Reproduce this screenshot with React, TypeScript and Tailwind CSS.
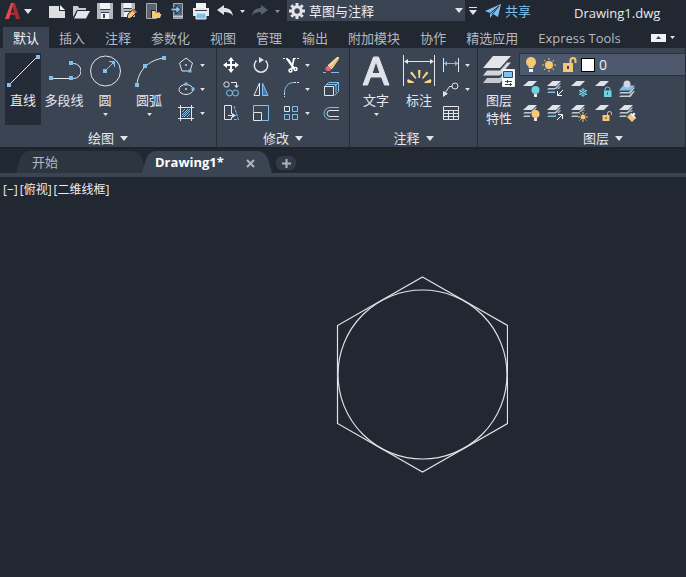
import React from "react";

const LINE = "#e2e5ea";
const BLUE = "#7fc1ee";
const YELLOW = "#f5c873";
const TEAL = "#6fd3e0";

const Svg: React.FC<{
  size?: number;
  width?: number;
  className?: string;
  children: React.ReactNode;
}> = ({ size = 18, width, className = "", children }) => (
  <svg
    width={width ?? size}
    height={size}
    viewBox={`0 0 ${width ?? size} ${size}`}
    fill="none"
    stroke={LINE}
    className={`shrink-0 ${className}`}
    aria-hidden="true"
  >
    {children}
  </svg>
);

const Caret: React.FC<{ big?: boolean; dim?: boolean }> = ({ big, dim }) => (
  <svg
    width={big ? 8 : 5}
    height={big ? 5 : 3}
    viewBox="0 0 8 5"
    className="shrink-0"
    aria-hidden="true"
  >
    <path d="M0 0h8L4 5z" fill={dim ? "#8b929d" : "#dfe2e7"} />
  </svg>
);

// small blue grip square
const Grip: React.FC<{ x: number; y: number; s?: number }> = ({
  x,
  y,
  s = 4,
}) => (
  <rect
    x={x - s / 2}
    y={y - s / 2}
    width={s}
    height={s}
    fill={BLUE}
    stroke="none"
  />
);

/* ---------- quick access icons ---------- */

const LogoIcon = () => (
  <Svg size={18} className="mr-0.5">
    <path d="M1 17 7 1h4l5 16h-4l-1-4H6l-1.500 4z" fill="#a82a34" stroke="none" />
    <path d="M7 1h2.500L5 17H1z" fill="#dc4a52" stroke="none" />
    <path d="M8.500 5 10.500 10.500H6.700z" fill="#222831" stroke="none" />
  </Svg>
);

const NewIcon = () => (
  <Svg>
    <path d="M1 4h10v5h6v7H1z" fill="#dcdee1" stroke="none" />
    <path d="M12 3v5h5z" fill="#f4f5f6" stroke="none" />
  </Svg>
);

const OpenIcon = () => (
  <Svg>
    <path d="M1 15V4h5l1 2h7v3H5z" fill="#c9ccd0" stroke="none" />
    <path d="M5.500 9H18l-4 7.500H2z" fill="#e3e5e8" stroke="none" />
    <path d="M2 15.500 5 8.500h9.500" stroke="#222831" />
  </Svg>
);

const SaveIcon = () => (
  <Svg>
    <path d="M1 1h16v16H1z" fill="#b4b8be" stroke="none" />
    <path d="M4 1h10v6H4zM5 10h8v7H5z" fill="#f2f3f4" stroke="none" />
    <path d="M4 7.500h10M5 10.500h8" stroke="#3a414c" />
    <path d="M7 12h2v4H7z" fill="#3a414c" stroke="none" />
  </Svg>
);

const SaveAsIcon = () => (
  <Svg>
    <path d="M1 1h14v14H1z" fill="#b4b8be" stroke="none" />
    <path d="M3.500 1h8v5h-8zM4 9h7v6H4z" fill="#f2f3f4" stroke="none" />
    <path d="M3.500 6.500h8M4 9.500h7" stroke="#3a414c" />
    <path d="m7 17 1-5 6-5 3 3-6 6z" fill={YELLOW} stroke="#222831" />
    <path d="m14 7 3 3-2 1.500-3-3z" fill="#d96a5a" stroke="none" />
  </Svg>
);

const OpenMobileIcon = () => (
  <Svg>
    <path d="M2.500 1.500h10v15h-10z" fill="#5c636d" stroke="#a4a9b1" />
    <path d="M7 16V8h4l1 2h5v6z" fill="#222831" stroke="none" />
    <path d="M8 15V9h3l1 1.500h4V12h1.500L16 16H8z" fill={YELLOW} stroke="none" />
  </Svg>
);

const SaveMobileIcon = () => (
  <Svg>
    <path d="M5.500 1.500h9v15h-9z" fill="#5c636d" stroke="#a4a9b1" />
    <path d="M5 14.500h10" stroke="#c4c7cc" strokeWidth="2" />
    <path d="M3 6h5V3l5 4.500L8 12V9H3z" fill={BLUE} stroke="#222831" />
  </Svg>
);

const PrintIcon = () => (
  <Svg>
    <path d="M4 1h10v5H4z" fill="#f2f3f4" stroke="none" />
    <path d="M1 6h16v8H1z" fill="#e6e8ea" stroke="none" />
    <path d="M3 8.500h12" stroke="#3a414c" />
    <path d="M4 11h10v6H4z" fill={BLUE} stroke="#f2f3f4" />
  </Svg>
);

const UndoIcon = () => (
  <Svg>
    <path
      d="M1 8l7-5v3c5 0 8 2 9 8-2-3-5-4-9-4v3z"
      fill="#dfe2e6"
      stroke="none"
    />
  </Svg>
);

const RedoIcon = () => (
  <Svg>
    <path
      d="M17 8l-7-5v3c-5 0-8 2-9 8 2-3 5-4 9-4v3z"
      fill="#59616d"
      stroke="none"
    />
  </Svg>
);

const GearIcon = () => (
  <Svg size={16}>
    <circle cx="8" cy="8" r="4.200" stroke="#e3e5e8" strokeWidth="3" />
    <path
      d="M8 0v3M8 13v3M0 8h3M13 8h3M2.300 2.300l2 2M11.700 11.700l2 2M13.700 2.300l-2 2M4.300 11.700l-2 2"
      stroke="#e3e5e8"
      strokeWidth="3"
    />
  </Svg>
);

const SendIcon = () => (
  <Svg size={16}>
    <path d="M0 8 16 1l-3 13-5-3-3 4v-5z" fill={BLUE} stroke="none" />
    <path d="M5 10.500 14 3 7 11.500" stroke="#222831" />
  </Svg>
);

/* ---------- draw icons ---------- */

const LineIcon = () => (
  <Svg size={34}>
    <path d="M3 32 32 3" />
    <Grip x={3} y={32} />
    <Grip x={32} y={4} />
  </Svg>
);

const PolylineIcon = () => (
  <Svg size={34}>
    <path d="M4 25.500h20M24 10.500h2.500a7.500 7.500 0 0 1 0 15H24" />
    <Grip x={4} y={25} />
    <Grip x={24} y={25} />
    <Grip x={24} y={10} />
  </Svg>
);

const CircleIcon = () => (
  <Svg size={34}>
    <circle cx="17.500" cy="18" r="15" />
    <path d="M17 18 26 9M21 8.500h5.500V14" stroke={BLUE} />
    <path d="M22 8h5v5z" fill={BLUE} stroke="none" />
    <Grip x={17} y={18} />
  </Svg>
);

const ArcIcon = () => (
  <Svg size={34}>
    <path d="M5 32C6 18 16 7 32 5" />
    <Grip x={5} y={32} />
    <Grip x={13} y={13} />
    <Grip x={32} y={5} />
  </Svg>
);

const PolygonIcon = () => (
  <Svg>
    <path d="m9 2 6.500 5L13 15H5L2.500 7z" />
    <Grip x={9} y={9} s={2} />
    <Grip x={13} y={15} s={3} />
  </Svg>
);

const EllipseIcon = () => (
  <Svg>
    <ellipse cx="9" cy="9.500" rx="7" ry="5" />
    <Grip x={9} y={4} s={3} />
    <Grip x={16} y={9} s={3} />
    <Grip x={9} y={9} s={2} />
  </Svg>
);

const HatchIcon = () => (
  <Svg>
    <path d="M1 3.500h16M1 14.500h16M3.500 1v16M14.500 1v16" />
    <path
      d="m5 8 3-3M5 11l6-6M5 13l8-8M7 13l6-6M10 13l3-3"
      stroke={BLUE}
    />
  </Svg>
);

/* ---------- modify icons ---------- */

const MoveIcon = () => (
  <Svg>
    <path d="M9 3v12M3 9h12" stroke="#fff" strokeWidth="2" />
    <path
      d="M9 1l3 4H6zM9 17l3-4H6zM1 9l4-3v6zM17 9l-4-3v6z"
      fill="#fff"
      stroke="none"
    />
  </Svg>
);

const RotateIcon = () => (
  <Svg>
    <path d="M4.500 4.500a6.700 6.700 0 1 0 9 0" strokeWidth="1.500" />
    <path d="M7 1v6l5-3z" fill={LINE} stroke="none" />
  </Svg>
);

const TrimIcon = () => (
  <Svg>
    <path d="M1 2.500h5M12 2.500h5" strokeDasharray="2 1" />
    <path d="m4 3 3 0 6 9-2 1zM11 2l2 0-2.500 11H9z" fill="#fff" stroke="none" />
    <circle cx="8.500" cy="14.500" r="1.500" stroke="#fff" strokeWidth="1.500" />
    <circle cx="13.500" cy="13" r="1.500" stroke="#fff" strokeWidth="1.500" />
  </Svg>
);

const EraseIcon = () => (
  <Svg>
    <path d="m6 9 9-8h2v2l-7 10z" fill="#f4dc9a" stroke="none" />
    <path d="m8 12 9-10" stroke="#e0a05c" />
    <path d="m4 11 3-2 3 3-2 3H5l-2-2z" fill="#e8656c" stroke="none" />
    <path d="m6 9 4 4" stroke="#f5f6f8" />
    <path d="M1 16.500h3M9 16.500h8" stroke={BLUE} />
  </Svg>
);

const CopyIcon = () => (
  <Svg>
    <circle cx="4.500" cy="4.500" r="2.700" />
    <path d="M9 2.500h5.500V6" />
    <path d="M12 5.500h5L14.500 8z" fill={LINE} stroke="none" />
    <circle cx="7.500" cy="13" r="3" stroke={BLUE} />
    <circle cx="13.500" cy="13" r="3" stroke={BLUE} />
  </Svg>
);

const MirrorIcon = () => (
  <Svg>
    <path d="M7.500 3v12.500H2z" />
    <path d="M10.500 3v12.500H16z" fill="#3f7db0" stroke={BLUE} />
  </Svg>
);

const FilletIcon = () => (
  <Svg>
    <path d="M2.500 14v-1C2.500 7 6 2.500 12 2.500" stroke={BLUE} />
    <path d="M12 2.500h5" strokeDasharray="2 1" />
    <path d="M2.500 13v4" strokeDasharray="2 1" />
  </Svg>
);

const BoxIcon = () => (
  <Svg>
    <path d="m2.500 6.500 4-4h10l-4 4M16.500 2.500v9l-4 4" stroke={BLUE} />
    <path d="M2.500 6.500h9v9h-9z" />
    <path d="M5 4.500h9v8" stroke={BLUE} />
  </Svg>
);

const StretchIcon = () => (
  <Svg>
    <path d="M9.500 10V1.500h-7v14h7V13" />
    <path d="M6 11.500h6" />
    <path d="m10 9 4 2.500-4 2.500z" fill={LINE} stroke="none" />
    <path d="m12 2 4.500 13.500H12" stroke={BLUE} strokeDasharray="3 1" />
  </Svg>
);

const ScaleIcon = () => (
  <Svg>
    <path d="M1.500 8V1.500h15v15H10" stroke={BLUE} />
    <path d="M1.500 8.500h8v8h-8z" />
  </Svg>
);

const ArrayIcon = () => (
  <Svg>
    <path d="M2.500 2.500h5v5h-5z" />
    <path
      d="M10.500 2.500h5v5h-5zM2.500 10.500h5v5h-5zM10.500 10.500h5v5h-5z"
      stroke={BLUE}
    />
  </Svg>
);

const OffsetIcon = () => (
  <Svg>
    <path d="M17 3.500H8a6 6 0 0 0 0 12h9" stroke={BLUE} />
    <path d="M17 6.500H8a3 3 0 0 0 0 6h9" />
  </Svg>
);

/* ---------- annotation icons ---------- */

const TextIcon = () => (
  <Svg size={34}>
    <path
      d="M4 32 14.500 4h5L30 32h-4.500l-3-8h-11l-3 8zM13 20.500h8L17 8.500z"
      fill="#dfe2e6"
      stroke="#dfe2e6"
    />
  </Svg>
);

const DimensionIcon = () => (
  <Svg size={34}>
    <path d="M1.500 2v31M32.500 2v31M3 8.500h28" />
    <path d="M2 8.500 6 6v5zM32 8.500 28 6v5z" fill={LINE} stroke="none" />
    <path
      d="M16 17h2.500l-.5 8h-1.500zM8 20l2-1.500 4.500 6.500-1 1zM26.500 20l-2-1.500-4.500 6.500 1 1zM5 28l1-2 6 3v1H6zM29.500 28l-1-2-6 3v1h6z"
      fill="#f8d684"
      stroke="none"
    />
  </Svg>
);

const LinearIcon = () => (
  <Svg>
    <path d="M1.500 2v14M16.500 2v14" />
    <path d="M2 7.500h14" stroke={BLUE} />
    <path d="m2 7.500 3-2.500v5zM16 7.500 13 5v5z" fill={BLUE} stroke="none" />
  </Svg>
);

const LeaderIcon = () => (
  <Svg>
    <circle cx="13" cy="6" r="3" />
    <path d="M10 6.500H7.500L3 13" />
    <path d="m1 17 0-6 5 2.500z" fill={LINE} stroke="none" />
  </Svg>
);

const TableIcon = () => (
  <Svg>
    <path d="M1.500 2.500h15v13h-15zM1.500 6.500h15M1.500 9.500h15M1.500 12.500h15M6.500 6v9M11.500 6v9" />
  </Svg>
);

/* ---------- layer icons ---------- */

const Sheets: React.FC<{ count?: number; accent?: boolean }> = ({
  count = 3,
  accent,
}) => (
  <>
    {count > 1 && (
      <>
        <path
          d="M1 13 2.500 11.500H9L13.500 6.500H15L10 13z"
          fill={accent ? BLUE : "#c3c7cd"}
          stroke="none"
        />
        <path
          d="M1 9.500 2.500 8H9L13.500 3.500H15L10 9.500z"
          fill="#c3c7cd"
          stroke="none"
        />
      </>
    )}
    <path d="M1 6 6.500 1H15l-5 5z" fill="#e0e2e6" stroke="none" />
  </>
);

const BulbMark: React.FC<{ color: string }> = ({ color }) => (
  <>
    <circle cx="13.500" cy="10" r="4" fill={color} stroke="none" />
    <path d="M12 14h3v3h-3z" fill="#e8eaed" stroke="none" />
  </>
);

// hides the sheets behind a mark
const Knockout = () => (
  <circle cx="13.500" cy="12.500" r="5.500" fill="#3b4453" stroke="none" />
);

const SunMark = () => (
  <>
    <circle cx="13" cy="13" r="2.500" fill={YELLOW} stroke="none" />
    <path
      d="M13 8v2M13 16v2M8 13h2M16 13h2M9.500 9.500l1 1M15.500 15.500l1 1M16.500 9.500l-1 1M10.500 15.500l-1 1"
      stroke={YELLOW}
    />
  </>
);

const layerTools = [
  {
    label: "关闭",
    icon: (
      <Svg>
        <Sheets count={1} />
        <BulbMark color={TEAL} />
      </Svg>
    ),
  },
  {
    label: "隔离",
    icon: (
      <Svg>
        <Sheets accent />
        <path d="M9 9h9v9H9z" fill="#3b4453" stroke="none" />
        <path d="m17 10-5 5M11.500 11v4.500H16" stroke="#fff" />
      </Svg>
    ),
  },
  {
    label: "冻结",
    icon: (
      <Svg>
        <Sheets count={1} />
        <circle cx="13" cy="12.500" r="3" stroke={TEAL} />
        <path
          d="M13 8v9M9 10.200l8 4.600M17 10.200l-8 4.600"
          stroke={TEAL}
        />
      </Svg>
    ),
  },
  {
    label: "锁定",
    icon: (
      <Svg>
        <Sheets count={1} />
        <path d="M11 11V9.500a2.500 2.500 0 0 1 5 0V11" stroke={TEAL} />
        <path d="M10 10.500h7.500V17H10z" fill={TEAL} stroke="none" />
        <path d="M13.500 12.500v2" stroke="#3b4453" />
      </Svg>
    ),
  },
  {
    label: "置为当前",
    icon: (
      <Svg>
        <path
          d="M1 17 2.500 15.500H11L15.500 11H17l-4.500 6zM1 13.500 2.500 12H11l4.500-4.500H17l-4.500 6z"
          fill="#c9cdd3"
          stroke="none"
        />
        <path d="m1 10.500 4-5h12l-4.500 5z" fill={BLUE} stroke="none" />
        <circle cx="9" cy="4" r="3.500" fill="#d3d6db" stroke="none" />
      </Svg>
    ),
  },
  {
    label: "打开所有图层",
    icon: (
      <Svg>
        <Sheets />
        <Knockout />
        <BulbMark color={YELLOW} />
      </Svg>
    ),
  },
  {
    label: "取消隔离",
    icon: (
      <Svg>
        <Sheets accent />
        <path d="M10 9h8v9h-8z" fill="#3b4453" stroke="none" />
        <path d="m11 16 5-5M12 10.500h4.500V15" stroke="#fff" />
      </Svg>
    ),
  },
  {
    label: "解冻",
    icon: (
      <Svg>
        <Sheets />
        <Knockout />
        <SunMark />
      </Svg>
    ),
  },
  {
    label: "解锁",
    icon: (
      <Svg>
        <Sheets count={1} />
        <path d="M13.500 12V9.500a2 2 0 0 1 4 0V11" stroke={YELLOW} />
        <path d="M8.500 11h7v6h-7z" fill={YELLOW} stroke="none" />
        <path d="M12 13v2" stroke="#3b4453" />
      </Svg>
    ),
  },
  {
    label: "匹配图层",
    icon: (
      <Svg>
        <Sheets />
        <path d="m8 12 4-4h6v9h-6z" fill="#3b4453" stroke="none" />
        <path d="m9 13 3-3 5 5-3 3z" fill={YELLOW} stroke="none" />
        <path d="m12 10 5 5 1-1-2-2.500 1.500-1.500-1.500-1.500-1.500 1.500-1.500-1z" fill="#fff" stroke="none" />
      </Svg>
    ),
  },
];

const LayerPropsIcon = () => (
  <Svg size={34}>
    <path d="M1 30 5 25h13l7-8h4L18 30z" fill="#c6cad0" stroke="none" />
    <path d="M1 22.500 5 17.500h13l7-8h4l-11 13z" fill="#d3d6db" stroke="none" />
    <path d="M1 15 11 3h18L18 15z" fill="#e3e5e8" stroke="none" />
    <path d="M20.500 16.500h12v17h-12z" fill="#fff" stroke="#eceef0" />
    <path d="M21.500 18.500h9v6h-9z" fill={BLUE} stroke="#3b4453" />
    <path d="M23 28.500h7M23 31.500h7M25.500 27v3M28.500 30v3" stroke="#3b4453" />
  </Svg>
);

const LayerStateIcons = () => (
  <>
    <Svg width={12}>
      <circle cx="6" cy="6" r="5" fill={YELLOW} stroke="none" />
      <path d="M3.500 9h5v3h-5z" fill={YELLOW} stroke="none" />
      <path d="M4 13h4v3H4z" fill="#f2f3f4" stroke="none" />
    </Svg>
    <Svg width={16}>
      <circle cx="8" cy="9" r="4" fill={YELLOW} stroke="none" />
      <path
        d="M8 2v2M8 14v2M1 9h2M13 9h2M3 4l1.500 1.500M11.500 12.500 13 14M13 4l-1.500 1.500M4.500 12.500 3 14"
        stroke={YELLOW}
      />
    </Svg>
    <Svg width={16}>
      <path
        d="M9.500 9V4.500a2.500 2.500 0 0 1 5 0V7"
        stroke={YELLOW}
        strokeWidth="2"
      />
      <path d="M2 7h10v9H2z" fill={YELLOW} stroke="none" />
      <path d="M6 10h2v3H6z" fill="#3b4453" stroke="none" />
    </Svg>
  </>
);

/* ---------- building blocks ---------- */

const BigButton: React.FC<{
  label: string;
  icon: React.ReactNode;
  caret?: boolean;
  className?: string;
}> = ({ label, icon, caret, className = "" }) => (
  <button
    type="button"
    className={`flex h-[72px] shrink-0 flex-col items-center whitespace-pre-line text-[13px] leading-[18px] text-[#e6e8ec] ${className}`}
  >
    {icon}
    <span className="mt-1 mb-1">{label}</span>
    {caret && <Caret />}
  </button>
);

const SmallButton: React.FC<{
  label: string;
  icon: React.ReactNode;
  caret?: boolean;
}> = ({ label, icon, caret }) => (
  <button
    type="button"
    aria-label={label}
    className="flex h-[18px] items-center gap-[5px]"
  >
    {icon}
    {caret && <Caret />}
  </button>
);

const Panel: React.FC<{
  title: string;
  className: string;
  titleClass?: string;
  children: React.ReactNode;
}> = ({ title, className, titleClass = "justify-center", children }) => (
  <section
    className={`flex flex-col border-r border-[#262d38] bg-[#3b4453] ${className}`}
  >
    <div className="flex h-[82px] items-start pt-[5px]">{children}</div>
    <button
      type="button"
      className={`flex items-center gap-1.5 text-[13px] leading-[17px] text-[#e6e8ec] ${titleClass}`}
    >
      {title}
      <Caret big />
    </button>
  </section>
);

const quickAccess = [
  { label: "新建", icon: <NewIcon /> },
  { label: "打开", icon: <OpenIcon /> },
  { label: "保存", icon: <SaveIcon /> },
  { label: "另存为", icon: <SaveAsIcon /> },
  { label: "从移动设备打开", icon: <OpenMobileIcon /> },
  { label: "保存到移动设备", icon: <SaveMobileIcon /> },
  { label: "打印", icon: <PrintIcon /> },
];

const ribbonTabs = [
  "默认",
  "插入",
  "注释",
  "参数化",
  "视图",
  "管理",
  "输出",
  "附加模块",
  "协作",
  "精选应用",
  "Express Tools",
];

const modifyTools = [
  { label: "移动", icon: <MoveIcon /> },
  { label: "旋转", icon: <RotateIcon /> },
  { label: "修剪", icon: <TrimIcon />, caret: true },
  { label: "删除", icon: <EraseIcon /> },
  { label: "复制", icon: <CopyIcon /> },
  { label: "镜像", icon: <MirrorIcon /> },
  { label: "圆角", icon: <FilletIcon />, caret: true },
  { label: "分解", icon: <BoxIcon /> },
  { label: "拉伸", icon: <StretchIcon /> },
  { label: "缩放", icon: <ScaleIcon /> },
  { label: "阵列", icon: <ArrayIcon />, caret: true },
  { label: "偏移", icon: <OffsetIcon /> },
];

const TitleBar = () => (
  <header className="flex h-[27px] items-start whitespace-nowrap pl-1">
    <div className="flex h-[22px] items-center">
      <button
        type="button"
        aria-label="应用程序菜单"
        className="flex items-center"
      >
        <LogoIcon />
        <Caret big />
      </button>
      <div className="ml-4 flex items-center gap-1.5">
        {quickAccess.map((item) => (
          <button key={item.label} type="button" aria-label={item.label}>
            {item.icon}
          </button>
        ))}
        <button
          type="button"
          aria-label="放弃"
          className="flex items-center gap-1.5"
        >
          <UndoIcon />
          <Caret />
        </button>
        <button
          type="button"
          aria-label="重做"
          className="flex items-center gap-1.5"
        >
          <RedoIcon />
          <Caret dim />
        </button>
      </div>
    </div>
    <div className="ml-[7px] flex h-[21px] w-[178px] items-center gap-1 bg-[#3b4453] px-0.5">
      <GearIcon />
      <select
        aria-label="工作空间"
        className="min-w-0 flex-1 appearance-none bg-transparent text-[13px] leading-5 text-[#eceef1]"
      >
        <option>草图与注释</option>
      </select>
      <Caret big />
    </div>
    <div className="flex h-[22px] items-center">
      <button
        type="button"
        aria-label="自定义快速访问工具栏"
        className="ml-1 flex flex-col items-center gap-0.5"
      >
        <span className="h-px w-2 bg-[#dfe2e7]" />
        <Caret big />
      </button>
      <button
        type="button"
        className="ml-2 flex items-center gap-1 text-[13px] leading-5 text-[#7fc1ee]"
      >
        <SendIcon />
        共享
      </button>
      <h1 className="ml-[43px] pt-1 text-[13px] leading-5 text-[#e8eaed]">
        Drawing1.dwg
      </h1>
    </div>
  </header>
);

const RibbonTabs = () => (
  <nav className="flex h-[21px] items-stretch whitespace-nowrap pl-[3px] text-[13px] leading-5">
    {ribbonTabs.map((tab, i) => (
      <button
        key={tab}
        type="button"
        className={`px-2.5 ${
          i === 0 ? "bg-[#3b4453] text-[#f0f2f4]" : "text-[#b4b9c1]"
        }`}
      >
        {tab}
      </button>
    ))}
    <button
      type="button"
      aria-label="最小化功能区"
      className="ml-5 flex items-center gap-1"
    >
      <span className="flex h-2 w-[15px] items-center justify-center bg-[#f0f1f3]">
        <svg width="5" height="3" viewBox="0 0 5 3" aria-hidden="true">
          <path d="M0 3h5L2.500 0z" fill="#3b4453" />
        </svg>
      </span>
      <Caret />
    </button>
  </nav>
);

const Ribbon = () => (
  <div className="flex overflow-hidden border-b-2 border-[#1e232c]">
    <Panel title="绘图" className="w-[217px] shrink-0">
      <div className="flex gap-0.5 pl-[5px]">
        <BigButton
          label="直线"
          icon={<LineIcon />}
          className="w-[36px] bg-[#252c37]"
        />
        <BigButton
          label="多段线"
          icon={<PolylineIcon />}
          className="w-[42px]"
        />
        <BigButton
          label="圆"
          icon={<CircleIcon />}
          className="w-[36px]"
          caret
        />
        <BigButton
          label="圆弧"
          icon={<ArcIcon />}
          className="w-[48px]"
          caret
        />
        <div className="flex flex-col gap-1.5 pt-[3px] pl-0.5">
          <SmallButton label="多边形" icon={<PolygonIcon />} caret />
          <SmallButton label="椭圆" icon={<EllipseIcon />} caret />
          <SmallButton label="图案填充" icon={<HatchIcon />} caret />
        </div>
      </div>
    </Panel>

    <Panel title="修改" className="w-[133px] shrink-0">
      <div className="grid grid-cols-[18px_18px_28px_18px] gap-x-3 gap-y-1.5 pt-[3px] pl-[5px]">
        {modifyTools.map((tool) => (
          <SmallButton key={tool.label} {...tool} />
        ))}
      </div>
    </Panel>

    <Panel title="注释" className="w-[128px] shrink-0">
      <div className="flex gap-[7px] pl-2">
        <BigButton
          label="文字"
          icon={<TextIcon />}
          className="w-[36px]"
          caret
        />
        <BigButton
          label="标注"
          icon={<DimensionIcon />}
          className="w-[36px]"
        />
        <div className="-ml-0.5 flex flex-col gap-1.5 pt-[3px]">
          <SmallButton label="线性" icon={<LinearIcon />} caret />
          <SmallButton label="引线" icon={<LeaderIcon />} caret />
          <SmallButton label="表格" icon={<TableIcon />} />
        </div>
      </div>
    </Panel>

    <Panel
      title="图层"
      className="min-w-0 flex-1"
      titleClass="justify-start pl-[105px]"
    >
      <BigButton
        label={"图层\n特性"}
        icon={<LayerPropsIcon />}
        className="ml-[3px] w-[36px]"
      />
      <div className="ml-0.5 flex min-w-0 flex-1 flex-col gap-1">
        <div className="flex h-[23px] items-center gap-1 border border-r-0 border-[#2b323e] bg-[#4d5a6e] pl-[5px]">
          <LayerStateIcons />
          <span className="size-[14px] border border-black bg-white" />
          <select
            aria-label="图层"
            className="min-w-0 flex-1 appearance-none bg-transparent text-sm leading-5 text-[#eceef1]"
          >
            <option>0</option>
          </select>
        </div>
        <div className="grid grid-cols-[repeat(5,18px)] gap-1.5 pl-[3px]">
          {layerTools.map((tool) => (
            <SmallButton key={tool.label} {...tool} />
          ))}
        </div>
      </div>
    </Panel>
  </div>
);

// slanted, rounded sides of a drawing tab
const tabShape =
  "relative isolate flex h-[22px] items-center text-[13px] before:absolute before:inset-y-0 before:left-0 before:right-1/2 before:-z-10 before:origin-bottom before:-skew-x-[16deg] before:rounded-tl-lg after:absolute after:inset-y-0 after:right-0 after:left-1/2 after:-z-10 after:origin-bottom after:skew-x-[16deg] after:rounded-tr-lg";

const FileTabs = () => (
  <div className="flex h-[28px] items-end border-b-4 border-[#3b4453] pl-4">
    <button
      type="button"
      className={`${tabShape} w-[130px] pt-0.5 pl-4 text-[#b4b9c1] before:bg-[#2d3541] after:bg-[#2d3541]`}
    >
      开始
    </button>
    <div
      className={`${tabShape} -ml-1 w-[129px] justify-between pt-0.5 pl-[13px] pr-4 font-bold text-white before:bg-[#3b4453] after:bg-[#3b4453]`}
    >
      <button type="button">Drawing1*</button>
      <button type="button" aria-label="关闭">
        <Svg size={9}>
          <path d="m1 1 7 7M8 1 1 8" stroke="#b0b6bf" strokeWidth="2" />
        </Svg>
      </button>
    </div>
    <button
      type="button"
      aria-label="新图形"
      className="mb-[3px] ml-[5px] flex h-[14px] w-5 items-center justify-center rounded-md bg-[#333b48]"
    >
      <Svg size={9}>
        <path d="M4.500 0v9M0 4.500h9" stroke="#b0b6bf" strokeWidth="2" />
      </Svg>
    </button>
  </div>
);

const DrawingArea = () => (
  <main className="relative flex-1 overflow-hidden pt-1 pl-[3px]">
    <div className="flex gap-0.5 text-xs leading-[18px] text-[#eceef1]">
      <button type="button">[−]</button>
      <button type="button">[俯视]</button>
      <button type="button">[二维线框]</button>
    </div>
    <svg
      width="172"
      height="198"
      viewBox="0 0 172 198"
      fill="none"
      stroke="#dfe3e8"
      strokeWidth="1.200"
      className="absolute top-[99px] left-[336px]"
      aria-label="六边形与内切圆"
    >
      <path d="M86.500 1 171.500 49.500v98L86.500 196 1.500 147.500v-98z" />
      <circle cx="86.500" cy="98.500" r="84.500" />
    </svg>
  </main>
);

export default function App() {
  return (
    <div className="flex min-h-screen flex-col overflow-hidden bg-[#222831] font-['Open_Sans','Noto_Sans_CJK_SC',sans-serif]">
      <TitleBar />
      <RibbonTabs />
      <Ribbon />
      <FileTabs />
      <DrawingArea />
    </div>
  );
}
